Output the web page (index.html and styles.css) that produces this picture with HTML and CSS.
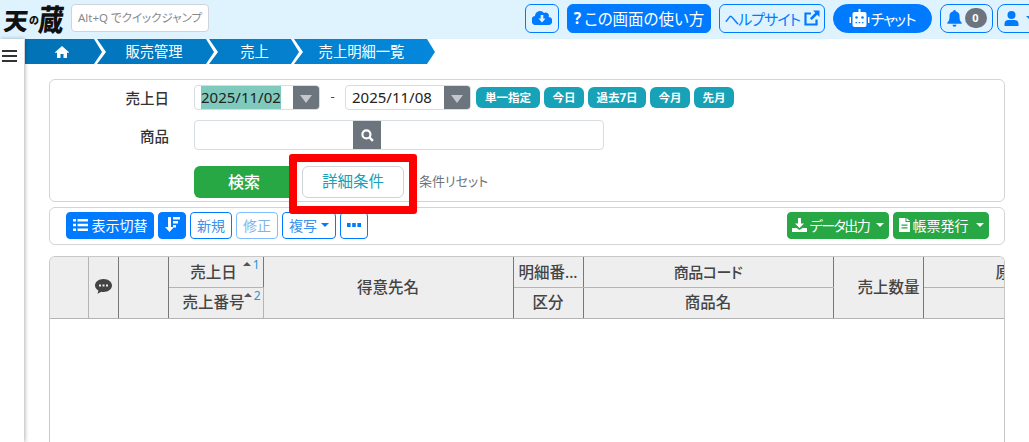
FILE: index.html
```html
<!DOCTYPE html>
<html lang="ja">
<head>
<meta charset="utf-8">
<title>売上明細一覧</title>
<link rel="stylesheet" href="styles.css">
</head>
<body>
<header class="topbar">
  <div class="logo"><span class="logo-a">天</span><span class="logo-no">の</span><span class="logo-b">蔵</span></div>
  <div class="jump">Alt+Q でクイックジャンプ</div>
  <div class="top-actions">
    <button class="tbtn outline cloud"><svg width="20" height="16" viewBox="0 0 20 16"><path fill="#007bff" d="M16.6 7A3.2 3.2 0 0 0 12 3 5 5 0 0 0 3 5.7v.3A4.5 4.5 0 0 0 4.5 15h11.500a4 4 0 0 0 .6-8z"/><path fill="#dff3ff" d="M8.700 5h2.600v3.500h2.200L10 12.500 6.500 8.500h2.200z"/></svg></button>
    <button class="tbtn solid usage"><span class="q">?</span>この画面の使い方</button>
    <button class="tbtn outline help"><span class="tight">ヘルプサイト</span><svg width="16" height="16" viewBox="0 0 16 16"><path fill="none" stroke="#007bff" stroke-width="2.200" d="M12.500 9.500V14.500H1.500V3.500H7"/><path fill="#007bff" d="M9 0.500h6.500V7l-2.300-2.300-5.400 5.400-1.900-1.900 5.400-5.400z"/></svg></button>
    <button class="tbtn solid chat"><svg width="21" height="18" viewBox="0 0 21 18"><path fill="#fff" d="M9.500 0h2v3h4a2 2 0 0 1 2 2v11a2 2 0 0 1-2 2h-10a2 2 0 0 1-2-2V5a2 2 0 0 1 2-2h4zM0.500 8h1.500v6H0.500zM19 8h1.500v6H19z"/><circle cx="7.500" cy="8.500" r="1.300" fill="#007bff"/><circle cx="13.500" cy="8.500" r="1.300" fill="#007bff"/><path fill="#007bff" d="M6.500 13h1.500v1.200H6.500zM9.700 13h1.500v1.200H9.700zM12.900 13h1.500v1.200h-1.500z"/></svg><span class="tight">チャット</span></button>
    <button class="tbtn outline bell"><svg width="15" height="17" viewBox="0 0 15 17"><path fill="#007bff" d="M7.500 0a1.200 1.200 0 0 1 1.200 1.300A5 5 0 0 1 12.500 6.500c0 4 1.200 5 2.200 6.200v1H.3v-1c1-1.200 2.200-2.200 2.200-6.200A5 5 0 0 1 6.300 1.300 1.200 1.200 0 0 1 7.500 0zM5.500 14.700h4a2 2 0 0 1-4 0z"/></svg><span class="badge">0</span></button>
    <button class="tbtn outline user"><svg width="15" height="15" viewBox="0 0 15 15"><circle cx="7.500" cy="4" r="4" fill="#007bff"/><path fill="#007bff" d="M0.500 15v-2a4 4 0 0 1 4-4h6a4 4 0 0 1 4 4v2z"/></svg><i class="caret blue"></i></button>
  </div>
</header>
<div class="app">
  <aside class="side">
    <div class="burger"><i></i><i></i><i></i></div>
  </aside>
  <main class="main">
    <nav class="crumbs">
      <a class="crumb c1"><svg width="14" height="12" viewBox="0 0 14 12"><path fill="#fff" d="M7 0l7 6.200-.9 1L12 6.300V12H8.500V8h-3v4H2V6.300L.9 7.200 0 6.200z"/></svg></a>
      <a class="crumb c2">販売管理</a>
      <a class="crumb c3">売上</a>
      <a class="crumb c4">売上明細一覧</a>
    </nav>
    <section class="card search">
      <div class="row r1">
        <label class="lbl">売上日</label>
        <div class="date"><span class="val"><span class="sel">2025/11/02</span></span><span class="drop"><i class="tri"></i></span></div>
        <span class="dash">-</span>
        <div class="date"><span class="val">2025/11/08</span><span class="drop"><i class="tri"></i></span></div>
        <div class="quick">
          <button class="qb w64">単一指定</button>
          <button class="qb w40">今日</button>
          <button class="qb w58">過去7日</button>
          <button class="qb w40">今月</button>
          <button class="qb w40">先月</button>
        </div>
      </div>
      <div class="row r2">
        <label class="lbl">商品</label>
        <div class="prod">
          <span class="prod-a"></span>
          <span class="prod-btn"><svg width="13" height="13" viewBox="0 0 12 12"><circle cx="5" cy="5" r="3.700" fill="none" stroke="#fff" stroke-width="2"/><path stroke="#fff" stroke-width="2.200" d="M7.800 7.800L11 11"/></svg></span>
        </div>
      </div>
      <div class="row r3">
        <button class="go">検索</button>
        <button class="detail">詳細条件</button>
        <span class="reset">条件リセット</span>
      </div>
    </section>
    <section class="card bar">
      <div class="bar-left">
        <button class="b solid sw"><svg width="15" height="12" viewBox="0 0 15 12"><path fill="#fff" d="M0 0h3v2.500H0zM4.500 0H15v2.500H4.500zM0 4.700h3v2.500H0zM4.500 4.700H15v2.500H4.500zM0 9.500h3V12H0zM4.500 9.500H15V12H4.500z"/></svg>表示切替</button>
        <button class="b solid sort"><svg width="16" height="15" viewBox="0 0 16 15"><path fill="#fff" d="M4 0h3v10h3l-4.500 5L1 10h3zM9 0h7v2.500H9zM9 4h5v2.500H9zM9 8h3v2.500H9z"/></svg></button>
        <button class="b line w42">新規</button>
        <button class="b line w42 off">修正</button>
        <button class="b line w54">複写<i class="caret blue"></i></button>
        <button class="b line w28"><svg width="14" height="4" viewBox="0 0 14 4"><path fill="#007bff" d="M0 0h3.600v4H0zM5.200 0h3.600v4H5.200zM10.400 0H14v4h-3.600z"/></svg></button>
      </div>
      <div class="bar-right">
        <button class="b green w102"><svg width="15" height="14" viewBox="0 0 15 14"><path fill="#fff" d="M6 0h3v5.500h3L7.500 10 3 5.500h3zM0 10h4.500l3 2 3-2H15v4H0z"/></svg><span class="narrow">データ出力</span><i class="caret"></i></button>
        <button class="b green w96"><svg width="11" height="14" viewBox="0 0 11 14"><path fill="#fff" d="M0 0h6.500v4H11v10H0z"/><path fill="#fff" d="M7.500 0L11 3H7.500z"/><path fill="#28a745" d="M2.500 6.500h6v1.200h-6zM2.500 9.200h6v1.200h-6z"/></svg>帳票発行<i class="caret"></i></button>
      </div>
    </section>
    <section class="grid-wrap">
      <table class="grid">
        <colgroup>
          <col class="k38"><col class="k30"><col class="k50"><col class="k95"><col class="k250"><col class="k70"><col class="k250"><col class="k90"><col class="k176">
        </colgroup>
        <thead>
          <tr>
            <th rowspan="2"></th>
            <th rowspan="2" class="ic"><svg width="17" height="15" viewBox="0 0 17 15"><path fill="#444" d="M8.500 0C13.200 0 17 2.900 17 6.500S13.200 13 8.500 13c-.8 0-1.500-.1-2.200-.2L2.500 14.800l.9-3.300C1.300 10.300 0 8.500 0 6.500 0 2.900 3.800 0 8.500 0z"/><path fill="#eee" d="M4 5.400h2v2H4zM7.500 5.400h2v2h-2zM11 5.400h2v2h-2z"/></svg></th>
            <th rowspan="2"></th>
            <th class="sorted">売上日<span class="mark m1"><i class="up"></i><b>1</b></span></th>
            <th rowspan="2">得意先名</th>
            <th>明細番...</th>
            <th class="pk">商品コード</th>
            <th rowspan="2" class="end">売上数量</th>
            <th>原価</th>
          </tr>
          <tr>
            <th class="sorted">売上番号<span class="mark m2"><i class="up"></i><b>2</b></span></th>
            <th>区分</th>
            <th>商品名</th>
            <th></th>
          </tr>
        </thead>
      </table>
    </section>
    <div class="annot"></div>
  </main>
</div>
</body>
</html>
```
FILE: styles.css
```css
* { box-sizing: border-box; }
html, body { margin: 0; height: 100%; overflow: hidden; }
body {
  width: 1029px; height: 442px; background: #fff; color: #212529;
  font-family: "Noto Sans", "Noto Sans CJK JP", sans-serif; font-size: 14px;
  font-feature-settings: "palt";
}
button { font-family: inherit; font-feature-settings: inherit; margin: 0; cursor: pointer; }

.topbar {
  height: 39px; background: #dff3ff; display: flex; align-items: flex-start; overflow: hidden;
}
.logo {
  width: 71px; height: 39px; padding-left: 4px; flex: none; display: flex; align-items: center; white-space: nowrap;
  font-family: "Noto Sans CJK JP", sans-serif; font-weight: 900; color: #111; font-feature-settings: normal; line-height: 1;
}
.logo-a { font-size: 24px; transform: skewX(-6deg); }
.logo-no { font-size: 10px; margin: 0 0 0 1px; }
.logo-b { font-size: 25px; transform: skewX(-6deg) scaleY(1.2) translateY(-1px); }
.jump {
  width: 138px; height: 28px; margin-top: 4px; background: #fff; border: 1px solid #ced4da; border-radius: 4px; flex: none;
  font-size: 11.500px; color: #888; line-height: 25px; padding-left: 6px; white-space: nowrap; overflow: hidden;
}
.top-actions { display: flex; gap: 8px; margin-left: 316px; margin-top: 4px; flex: none; }
.tbtn {
  height: 29px; border-radius: 6px; font-size: 16px; display: flex; align-items: center; justify-content: center;
  padding: 0 0 1px; white-space: nowrap; flex: none;
}
.tbtn.outline { background: transparent; border: 1px solid #007bff; color: #007bff; }
.tbtn.solid { background: #007bff; border: 1px solid #007bff; color: #fff; }
.cloud { width: 34px; }
.usage { width: 144px; font-size: 15.500px; }
.q { font-weight: 700; margin-right: 3px; }
.help { width: 106px; gap: 4px; }
.tight { font-size: 15px; letter-spacing: -1px; }
.chat { width: 99px; border-radius: 15px; gap: 0; }
.bell { width: 53px; gap: 3px; border-radius: 8px; }
.user { width: 60px; margin-left: -4px; justify-content: flex-start; padding-left: 6px; gap: 3px; border-radius: 8px; }
.badge {
  width: 22px; height: 20px; background: #6c757d; color: #fff; border-radius: 10px; font-size: 11px; font-weight: 700;
  line-height: 20px; text-align: center;
}
.caret {
  display: inline-block; width: 0; height: 0; border-left: 4px solid transparent; border-right: 4px solid transparent;
  border-top: 4px solid #fff; margin-left: 4px; vertical-align: 2px;
}
.caret.blue { border-top-color: #007bff; }

.app { display: flex; height: 403px; }
.side { width: 24px; flex: none; box-shadow: 1px 0 4px rgba(0,0,0,.3); background: #fff; position: relative; z-index: 1; }
.burger { padding: 11px 2px 0; display: flex; flex-direction: column; gap: 3px; }
.burger i { display: block; height: 2px; background: #333; width: 15px; }

.main { flex: 1; min-width: 0; position: relative; overflow: hidden; }
.crumbs {
  display: flex; width: 410px; height: 25px; margin-left: 1px; color: #fff; font-size: 14.300px; line-height: 25px;
  background: linear-gradient(90deg, #0272b6, #0488dc); font-feature-settings: normal;
  clip-path: polygon(0 0, 402px 0, 410px 13px, 402px 25px, 0 25px);
}
.crumb { position: relative; display: flex; align-items: center; justify-content: center; height: 25px; flex: none; }
.crumb:not(.c4)::after {
  content: ""; position: absolute; right: -3px; top: 0; width: 12px; height: 25px; background: #fff;
  clip-path: polygon(0 0, 3px 0, 12px 13px, 3px 25px, 0 25px, 8px 13px);
}
.c1 { width: 78px; padding-right: 4px; }
.c2 { width: 112px; padding-right: 10px; }
.c3 { width: 85px; padding-right: 6px; }
.c4 { width: 135px; padding-right: 12px; }

.card { margin-left: 25px; width: 956px; border: 1px solid #d4d4d4; border-radius: 6px; background: #fff; }
.search { margin-top: 15px; height: 123px; padding-top: 5px; }
.row { display: flex; align-items: center; }
.r1 { height: 25px; }
.r2 { height: 30px; margin-top: 10px; }
.r3 { height: 32px; margin-top: 16px; padding-left: 144px; }
.lbl { width: 119px; text-align: right; margin-right: 25px; font-weight: 500; color: #333; flex: none; font-size: 14.500px; font-feature-settings: normal; }
.date {
  width: 126px; height: 25px; display: flex; border: 1px solid #d8dde2; border-radius: 4px; overflow: hidden; background: #fff; flex: none;
}
.val { flex: 1; padding-left: 6px; font-size: 15px; line-height: 23px; color: #222; white-space: nowrap; }
.sel { background: #7fcabd; display: inline-block; height: 23px; }
.drop { width: 26px; background: #6c757d; display: flex; align-items: center; justify-content: center; }
.tri { width: 0; height: 0; border-left: 6px solid transparent; border-right: 6px solid transparent; border-top: 8px solid #c4c8cc; margin-top: 2px; }
.dash { width: 25px; text-align: center; font-size: 13px; color: #444; position: relative; top: -2px; }
.quick { display: flex; gap: 4px; margin-left: 5px; }
.qb {
  height: 21px; background: #17a2b8; border: 0; border-radius: 6px; color: #fff; font-size: 11.500px; font-weight: 700; padding: 0 0 1px; white-space: nowrap;
  font-feature-settings: normal;
}
.w64 { width: 64px; } .w40 { width: 40px; } .w58 { width: 58px; }
.prod { width: 410px; height: 30px; display: flex; border: 1px solid #d8dde2; border-radius: 4px; overflow: hidden; }
.prod-a { width: 158px; }
.prod-btn { width: 28px; background: #6c757d; display: flex; align-items: center; justify-content: center; margin-top: -1px; margin-bottom: -1px; }
.go {
  width: 100px; height: 32px; background: #28a745; color: #fff; border: 0; border-radius: 6px 0 0 6px; font-size: 16px; font-weight: 500; padding: 0 0 3px;
  font-feature-settings: normal;
}
.detail {
  width: 102px; height: 32px; margin-left: 8px; background: #fff; border: 1px solid #ced4da; border-radius: 6px; color: #17a2b8; font-size: 15.500px; padding: 0 0 3px;
  font-feature-settings: normal;
}
.reset { margin-left: 15px; font-size: 13px; color: #6c757d; white-space: nowrap; position: relative; top: -2px; }

.bar { margin-top: 5px; height: 38px; display: flex; justify-content: space-between; padding: 4px 15px 0 16px; }
.bar-left, .bar-right { display: flex; gap: 4px; }
.b {
  height: 27px; border-radius: 4px; font-size: 14px; padding: 0 0 2px; display: flex; align-items: center; justify-content: center; white-space: nowrap; flex: none;
  font-feature-settings: normal;
}
.b.solid { background: #007bff; border: 1px solid #007bff; color: #fff; }
.sw { width: 88px; gap: 4px; }
.sort { width: 28px; }
.b.line { background: #fff; border: 1px solid #007bff; color: #3a92ec; }
.b.off { border-color: #7fbdff; color: #7fb5ee; }
.w42 { width: 42px; } .w54 { width: 54px; } .w28 { width: 28px; }
.b.green { background: #28a745; border: 1px solid #28a745; color: #fff; gap: 3px; font-size: 14px; font-feature-settings: "palt"; }
.narrow { letter-spacing: -1.500px; }
.w102 { width: 102px; } .w96 { width: 96px; }

.grid-wrap {
  margin: 11px 0 0 25px; width: 956px; height: 240px; border: 1px solid #c8c8c8; border-radius: 6px 6px 0 0; border-bottom: 0; overflow: hidden;
}
.grid { table-layout: fixed; width: 1049px; border-collapse: collapse; }
.k38 { width: 38px; } .k30 { width: 30px; } .k50 { width: 50px; } .k95 { width: 95px; }
.k250 { width: 250px; } .k70 { width: 70px; } .k90 { width: 90px; } .k176 { width: 176px; }
.grid th {
  height: 30.500px; padding: 0 0 2px; background: #eee; font-weight: 500; font-size: 15.500px; color: #444; text-align: center;
  border-right: 1px solid #777; border-bottom: 1px solid #b4b4b4; white-space: nowrap; position: relative; overflow: hidden;
  font-feature-settings: normal;
}
.grid th:first-child { border-right-color: #b4b4b4; }
.grid th.ic { padding-top: 0; line-height: 0; }
.grid th.sorted { padding-right: 4px; }
.grid th.pk { font-feature-settings: "palt"; font-size: 15px; letter-spacing: -0.500px; }
.grid th.end { text-align: right; padding-right: 3px; }
.mark { position: absolute; right: 3px; top: 1px; display: flex; align-items: flex-start; gap: 2px; }
.up { width: 0; height: 0; border-left: 4px solid transparent; border-right: 4px solid transparent; border-bottom: 4px solid #555; margin-top: 4px; }
.mark b { font-weight: 400; font-size: 12px; color: #2196d8; line-height: 14px; }
.m2 { right: 2px; }

.annot {
  position: absolute; left: 265px; top: 115px; width: 128px; height: 60px; border: 8px solid #f00; border-radius: 3px; pointer-events: none;
}
```
